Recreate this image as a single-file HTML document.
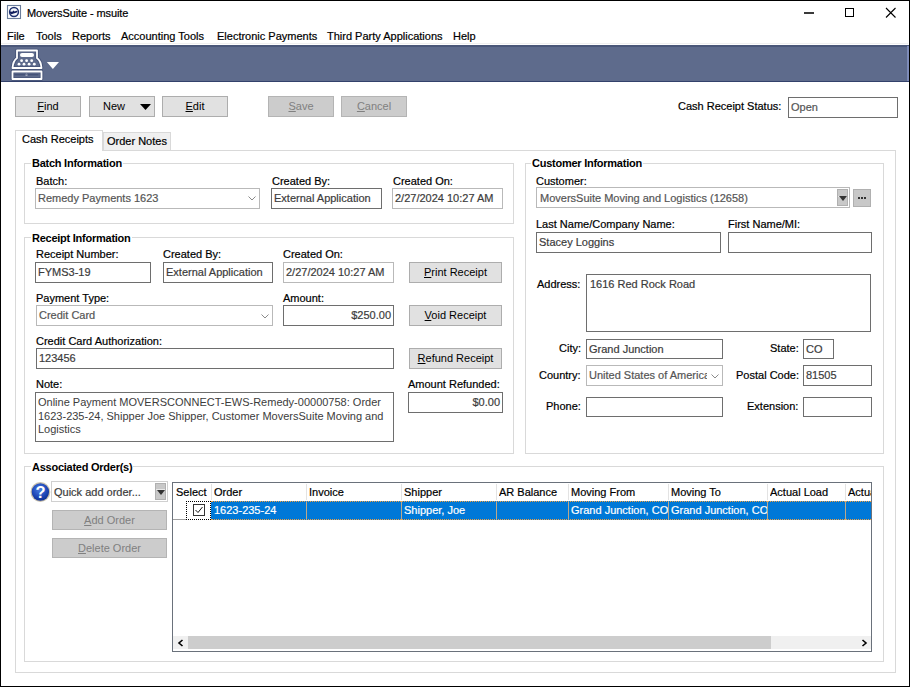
<!DOCTYPE html>
<html><head><meta charset="utf-8">
<style>
*{box-sizing:border-box;margin:0;padding:0}
html,body{width:910px;height:687px;overflow:hidden;background:#fff}
body{position:relative;font-family:"Liberation Sans",sans-serif;font-size:11px;color:#000}
.a{position:absolute}
.t{position:absolute;white-space:nowrap;line-height:13px;font-size:11px;-webkit-text-stroke:0.2px currentColor}
.b{font-weight:bold;letter-spacing:-0.25px;-webkit-text-stroke:0}
.box{position:absolute;background:#fff;border:1px solid #6e6e6e}
.lbox{position:absolute;background:#fff;border:1px solid #b9b9b9}
.btn{position:absolute;background:#e1e1e1;border:1px solid #adadad;text-align:center;line-height:19px}
.dis{background:#cccccc;border-color:#b4b4b4;color:#808080}
.grp{position:absolute;border:1px solid #d9d9d9}
.ft{color:#3c3c3c}
.gt{color:#555}
u{text-decoration:underline;text-decoration-thickness:1px;text-underline-offset:1px}
</style></head><body>
<!-- window border -->
<div class="a" style="left:0;top:0;width:910px;height:687px;border:1px solid #000"></div>
<!-- title -->
<svg class="a" style="left:0;top:0" width="24" height="24" viewBox="0 0 24 24">
 <rect x="7.5" y="5.5" width="13" height="13" fill="#fbfcfe" stroke="#6b7d9b" stroke-width="1.1"/>
 <circle cx="14" cy="12" r="4.4" fill="#f4f6fa" stroke="#1c2e6e" stroke-width="1.5"/>
 <path d="M9.8 11.6 L12.3 11.8 L13.5 10.6 L14.6 11.6 L16.6 10.7 L17.5 11.2 L16.8 12.6 L13.6 13.4 L11.4 14.2 L10.2 13.4 Z" fill="#0f1c5c"/>
</svg>
<div class="t" style="left:27px;top:7px;letter-spacing:-0.1px">MoversSuite - msuite</div>
<div class="a" style="left:804px;top:12px;width:10px;height:2px;background:#3a3a3a"></div>
<div class="a" style="left:845px;top:8px;width:9px;height:9px;border:1px solid #000"></div>
<svg class="a" style="left:885px;top:7px" width="12" height="12" viewBox="0 0 12 12"><path d="M1 1 L10.5 10.5 M10.5 1 L1 10.5" stroke="#000" stroke-width="1.1"/></svg>
<!-- menu -->
<div class="t" style="left:7px;top:30px">File</div>
<div class="t" style="left:36px;top:30px">Tools</div>
<div class="t" style="left:72px;top:30px">Reports</div>
<div class="t" style="left:121px;top:30px">Accounting Tools</div>
<div class="t" style="left:217px;top:30px">Electronic Payments</div>
<div class="t" style="left:327px;top:30px">Third Party Applications</div>
<div class="t" style="left:453px;top:30px">Help</div>
<div class="a" style="left:1px;top:43px;width:907px;height:1px;background:#f0f0f0"></div>
<!-- toolbar -->
<div class="a" style="left:1px;top:45px;width:908px;height:37px;background:#5e6b8c;border-top:2px solid #4a5779;border-bottom:1px solid #33416b"></div>
<div class="a" style="left:907px;top:46px;width:2px;height:35px;background:#7d8bb8"></div>
<svg class="a" style="left:0;top:0" width="70" height="85" viewBox="0 0 70 85">
 <g fill="none" stroke="#34426a" stroke-width="3.6" stroke-linejoin="round" opacity="0.55">
  <path d="M12.5 68 Q13 61 17 58 L17 50.5 L37 50.5 L37 58 Q41 61 41.5 68 Z"/>
  <rect x="12.5" y="71.5" width="29" height="7.5"/>
 </g>
 <g fill="none" stroke="#fff" stroke-width="1.8" stroke-linejoin="round">
  <path d="M12.5 68 Q13 61 17 58 L17 50.5 L37 50.5 L37 58 Q41 61 41.5 68 Z"/>
  <rect x="12.5" y="71.5" width="29" height="7.5"/>
 </g>
 <rect x="20" y="53" width="14" height="4" rx="2" fill="#fff"/>
 <g fill="#fff"><circle cx="21.6" cy="60.7" r="1.4"/><circle cx="26.6" cy="60.7" r="1.4"/><circle cx="31.7" cy="60.7" r="1.4"/>
 <circle cx="19" cy="64.2" r="1.4"/><circle cx="24" cy="64.2" r="1.4"/><circle cx="29.1" cy="64.2" r="1.4"/><circle cx="34.3" cy="64.2" r="1.4"/>
 <ellipse cx="26.5" cy="74.8" rx="1.3" ry="1" /></g>
 <path d="M14.5 74.8 L38.5 74.8" stroke="#3a4870" stroke-width="1"/>
 <path d="M46.8 62 L59 62 L52.9 69 Z" fill="#fff"/>
</svg>
<!-- buttons -->
<div class="btn" style="left:15px;top:96px;width:66px;height:21px"><u>F</u>ind</div>
<div class="btn" style="left:89px;top:96px;width:66px;height:21px;text-align:left;padding-left:13px">New<svg class="a" style="left:50px;top:7px" width="11" height="6"><path d="M0 0 L11 0 L5.5 6 Z" fill="#000"/></svg></div>
<div class="btn" style="left:162px;top:96px;width:66px;height:21px"><u>E</u>dit</div>
<div class="btn dis" style="left:268px;top:96px;width:66px;height:21px"><u>S</u>ave</div>
<div class="btn dis" style="left:341px;top:96px;width:66px;height:21px"><u>C</u>ancel</div>
<div class="t" style="left:678px;top:100px">Cash Receipt Status:</div>
<div class="box" style="left:788px;top:97px;width:110px;height:21px"><div class="t" style="left:2px;top:3px;color:#555">Open</div></div>
<!-- tabs -->
<div class="a" style="left:15px;top:150px;width:881px;height:523px;border:1px solid #d9d9d9"></div>
<div class="a" style="left:103px;top:132px;width:68px;height:19px;background:#f0f0f0;border:1px solid #d9d9d9"></div>
<div class="t" style="left:107px;top:135px">Order Notes</div>
<div class="a" style="left:15px;top:130px;width:88px;height:21px;background:#fff;border:1px solid #d9d9d9;border-bottom:none"></div>
<div class="t" style="left:22px;top:133px">Cash Receipts</div>

<!-- Batch Information -->
<div class="grp" style="left:24px;top:163px;width:490px;height:61px"></div>
<div class="t b" style="left:31px;top:157px;background:#fff;padding:0 1px">Batch Information</div>
<div class="t" style="left:36px;top:175px">Batch:</div>
<div class="lbox" style="left:35px;top:188px;width:225px;height:21px"><div class="t gt" style="left:2px;top:3px">Remedy Payments 1623</div>
 <svg class="a" style="left:212px;top:7px" width="8" height="5"><path d="M0.5 0.5 L4 4 L7.5 0.5" stroke="#8a8a8a" fill="none"/></svg></div>
<div class="t" style="left:272px;top:175px">Created By:</div>
<div class="box" style="left:271px;top:188px;width:111px;height:21px"><div class="t ft" style="left:2px;top:3px">External Application</div></div>
<div class="t" style="left:393px;top:175px">Created On:</div>
<div class="lbox" style="left:392px;top:188px;width:111px;height:21px"><div class="t ft" style="left:2px;top:3px">2/27/2024 10:27 AM</div></div>

<!-- Receipt Information -->
<div class="grp" style="left:24px;top:237px;width:490px;height:217px"></div>
<div class="t b" style="left:31px;top:232px;background:#fff;padding:0 1px">Receipt Information</div>
<div class="t" style="left:36px;top:248px">Receipt Number:</div>
<div class="box" style="left:35px;top:262px;width:116px;height:21px"><div class="t ft" style="left:2px;top:3px">FYMS3-19</div></div>
<div class="t" style="left:163px;top:248px">Created By:</div>
<div class="box" style="left:163px;top:262px;width:110px;height:21px"><div class="t ft" style="left:2px;top:3px">External Application</div></div>
<div class="t" style="left:283px;top:248px">Created On:</div>
<div class="lbox" style="left:283px;top:262px;width:111px;height:21px"><div class="t ft" style="left:2px;top:3px">2/27/2024 10:27 AM</div></div>
<div class="btn" style="left:409px;top:262px;width:93px;height:21px"><u>P</u>rint Receipt</div>

<div class="t" style="left:36px;top:292px">Payment Type:</div>
<div class="lbox" style="left:36px;top:305px;width:237px;height:21px"><div class="t gt" style="left:2px;top:3px">Credit Card</div>
 <svg class="a" style="left:224px;top:8px" width="8" height="5"><path d="M0.5 0.5 L4 4 L7.5 0.5" stroke="#8a8a8a" fill="none"/></svg></div>
<div class="t" style="left:283px;top:292px">Amount:</div>
<div class="box" style="left:283px;top:305px;width:111px;height:21px"><div class="t ft" style="right:2px;top:3px">$250.00</div></div>
<div class="btn" style="left:409px;top:305px;width:93px;height:21px"><u>V</u>oid Receipt</div>

<div class="t" style="left:36px;top:335px">Credit Card Authorization:</div>
<div class="box" style="left:36px;top:348px;width:358px;height:21px"><div class="t ft" style="left:2px;top:3px">123456</div></div>
<div class="btn" style="left:409px;top:348px;width:93px;height:21px"><u>R</u>efund Receipt</div>

<div class="t" style="left:36px;top:378px">Note:</div>
<div class="box" style="left:35px;top:392px;width:359px;height:50px"><div class="a ft" style="left:2px;top:3px;width:350px;line-height:13.5px;font-size:11px">Online Payment MOVERSCONNECT-EWS-Remedy-00000758: Order 1623-235-24, Shipper Joe Shipper, Customer MoversSuite Moving and Logistics</div></div>
<div class="t" style="left:408px;top:378px">Amount Refunded:</div>
<div class="box" style="left:408px;top:392px;width:95px;height:21px"><div class="t ft" style="right:2px;top:3px">$0.00</div></div>

<!-- Customer Information -->
<div class="grp" style="left:525px;top:163px;width:359px;height:291px"></div>
<div class="t b" style="left:531px;top:157px;background:#fff;padding:0 1px">Customer Information</div>
<div class="t" style="left:536px;top:175px">Customer:</div>
<div class="lbox" style="left:536px;top:187px;width:314px;height:21px"><div class="t gt" style="left:3px;top:4px">MoversSuite Moving and Logistics (12658)</div>
 <div class="a" style="left:300px;top:1px;width:11px;height:17px;background:#c8c8c8;border:1px solid #b0b0b0"><div class="a" style="left:0;top:6px;width:9px;height:1px;background:#e8e8e8"></div><svg class="a" style="left:1px;top:6px" width="8" height="5"><path d="M0 0 L8 0 L4 5 Z" fill="#333"/></svg></div></div>
<div class="a" style="left:853px;top:189px;width:18px;height:18px;background:#c8c8c8;border:1px solid #b0b0b0"><div class="a" style="left:4px;top:7px;width:2px;height:2px;background:#333"></div><div class="a" style="left:7px;top:7px;width:2px;height:2px;background:#333"></div><div class="a" style="left:10px;top:7px;width:2px;height:2px;background:#333"></div></div>
<div class="t" style="left:536px;top:218px">Last Name/Company Name:</div>
<div class="box" style="left:536px;top:232px;width:185px;height:21px"><div class="t ft" style="left:2px;top:3px">Stacey Loggins</div></div>
<div class="t" style="left:728px;top:218px">First Name/MI:</div>
<div class="box" style="left:728px;top:232px;width:144px;height:21px"></div>

<div class="t" style="left:537px;top:278px">Address:</div>
<div class="box" style="left:586px;top:274px;width:285px;height:58px"><div class="t ft" style="left:3px;top:3px">1616 Red Rock Road</div></div>
<div class="t" style="left:559px;top:342px">City:</div>
<div class="box" style="left:586px;top:339px;width:137px;height:20px"><div class="t ft" style="left:2px;top:3px">Grand Junction</div></div>
<div class="t" style="left:770px;top:342px">State:</div>
<div class="box" style="left:803px;top:339px;width:31px;height:20px"><div class="t ft" style="left:2px;top:3px">CO</div></div>
<div class="t" style="left:539px;top:369px">Country:</div>
<div class="lbox" style="left:586px;top:365px;width:137px;height:21px"><div class="t" style="left:2px;top:3px;width:118px;overflow:hidden;color:#555">United States of America</div>
 <svg class="a" style="left:124px;top:8px" width="8" height="5"><path d="M0.5 0.5 L4 4 L7.5 0.5" stroke="#8a8a8a" fill="none"/></svg></div>
<div class="t" style="left:736px;top:369px">Postal Code:</div>
<div class="box" style="left:803px;top:365px;width:69px;height:21px"><div class="t ft" style="left:2px;top:3px">81505</div></div>
<div class="t" style="left:546px;top:400px">Phone:</div>
<div class="box" style="left:586px;top:397px;width:137px;height:20px"></div>
<div class="t" style="left:747px;top:400px">Extension:</div>
<div class="box" style="left:803px;top:397px;width:69px;height:20px"></div>

<!-- Associated Orders -->
<div class="grp" style="left:24px;top:466px;width:860px;height:196px"></div>
<div class="t b" style="left:31px;top:461px;background:#fff;padding:0 1px">Associated Order(s)</div>
<svg class="a" style="left:29px;top:481px" width="22" height="22" viewBox="0 0 22 22">
 <defs><radialGradient id="hg" cx="45%" cy="35%" r="70%"><stop offset="0" stop-color="#4a7de0"/><stop offset="0.6" stop-color="#1f48b8"/><stop offset="1" stop-color="#0a2a8a"/></radialGradient></defs>
 <circle cx="11.4" cy="11" r="9.9" fill="#c9c2ae"/>
 <circle cx="11.4" cy="11" r="8.7" fill="url(#hg)"/>
 <text x="11.6" y="17" text-anchor="middle" font-family="Liberation Sans" font-weight="bold" font-size="16.5" fill="#fff">?</text>
</svg>
<div class="lbox" style="left:51px;top:481px;width:117px;height:21px;border-color:#d0d0d0"><div class="t ft" style="left:2px;top:4px">Quick add order...</div>
 <div class="a" style="left:103px;top:1px;width:11px;height:17px;background:#c8c8c8;border:1px solid #b0b0b0"><div class="a" style="left:0;top:5px;width:9px;height:1px;background:#e8e8e8"></div><svg class="a" style="left:1px;top:6px" width="8" height="5"><path d="M0 0 L8 0 L4 5 Z" fill="#333"/></svg></div></div>
<div class="btn dis" style="left:52px;top:510px;width:115px;height:20px"><u>A</u>dd Order</div>
<div class="btn dis" style="left:52px;top:538px;width:115px;height:20px"><u>D</u>elete Order</div>

<!-- grid -->
<div class="a" style="left:172px;top:482px;width:700px;height:170px;border:1px solid #6a717b;overflow:hidden;background:#fff">
<div class="t" style="left:3px;top:3px;width:34px;overflow:hidden">Select</div>
<div class="a" style="left:38px;top:1px;width:1px;height:16px;background:#e3e3e3"></div>
<div class="t" style="left:41px;top:3px;width:91px;overflow:hidden">Order</div>
<div class="a" style="left:133px;top:1px;width:1px;height:16px;background:#e3e3e3"></div>
<div class="t" style="left:136px;top:3px;width:91px;overflow:hidden">Invoice</div>
<div class="a" style="left:228px;top:1px;width:1px;height:16px;background:#e3e3e3"></div>
<div class="t" style="left:231px;top:3px;width:91px;overflow:hidden">Shipper</div>
<div class="a" style="left:323px;top:1px;width:1px;height:16px;background:#e3e3e3"></div>
<div class="t" style="left:326px;top:3px;width:68px;overflow:hidden">AR Balance</div>
<div class="a" style="left:395px;top:1px;width:1px;height:16px;background:#e3e3e3"></div>
<div class="t" style="left:398px;top:3px;width:96px;overflow:hidden">Moving From</div>
<div class="a" style="left:495px;top:1px;width:1px;height:16px;background:#e3e3e3"></div>
<div class="t" style="left:498px;top:3px;width:95px;overflow:hidden">Moving To</div>
<div class="a" style="left:594px;top:1px;width:1px;height:16px;background:#e3e3e3"></div>
<div class="t" style="left:597px;top:3px;width:74px;overflow:hidden">Actual Load</div>
<div class="a" style="left:672px;top:1px;width:1px;height:16px;background:#e3e3e3"></div>
<div class="t" style="left:675px;top:3px;width:56px;overflow:hidden">Actual Load</div>
<div class="a" style="left:38px;top:18px;width:700px;height:19px;background:#0078d7"></div>
<div class="a" style="left:38px;top:18px;width:700px;height:1px;border-top:1px dotted #f0a040"></div>
<div class="a" style="left:38px;top:36px;width:700px;height:1px;border-top:1px dotted #f0a040"></div>
<div class="a" style="left:133px;top:18px;width:1px;height:19px;background:#b9a88c"></div>
<div class="a" style="left:228px;top:18px;width:1px;height:19px;background:#b9a88c"></div>
<div class="a" style="left:323px;top:18px;width:1px;height:19px;background:#b9a88c"></div>
<div class="a" style="left:395px;top:18px;width:1px;height:19px;background:#b9a88c"></div>
<div class="a" style="left:495px;top:18px;width:1px;height:19px;background:#b9a88c"></div>
<div class="a" style="left:594px;top:18px;width:1px;height:19px;background:#b9a88c"></div>
<div class="a" style="left:672px;top:18px;width:1px;height:19px;background:#b9a88c"></div>
<div class="t" style="left:41px;top:21px;width:92px;overflow:hidden;color:#fff">1623-235-24</div>
<div class="t" style="left:231px;top:21px;width:92px;overflow:hidden;color:#fff">Shipper, Joe</div>
<div class="t" style="left:398px;top:21px;width:97px;overflow:hidden;color:#fff">Grand Junction, CO</div>
<div class="t" style="left:498px;top:21px;width:96px;overflow:hidden;color:#fff">Grand Junction, CO</div>
<div class="a" style="left:0;top:36px;width:13px;height:1px;background:#a0a0a0"></div>
<div class="a" style="left:13px;top:18px;width:25px;height:19px;border:1px dotted #000"></div>
<svg class="a" style="left:20px;top:21px" width="12" height="12" viewBox="0 0 12 12"><rect x="0.5" y="0.5" width="11" height="11" fill="#fff" stroke="#333"/><path d="M2.5 6 L5 8.5 L9.5 3" stroke="#111" stroke-width="1" fill="none"/></svg>
<div class="a" style="left:0;top:153px;width:698px;height:13px;background:#f0f0f0"></div>
<div class="a" style="left:15px;top:153px;width:583px;height:13px;background:#cdcdcd"></div>
<svg class="a" style="left:4px;top:156px" width="7" height="8"><path d="M5.5 1 L2 4 L5.5 7" stroke="#000" stroke-width="1.6" fill="none"/></svg>
<svg class="a" style="left:688px;top:156px" width="7" height="8"><path d="M1.5 1 L5 4 L1.5 7" stroke="#000" stroke-width="1.6" fill="none"/></svg>
</div>
</body></html>
